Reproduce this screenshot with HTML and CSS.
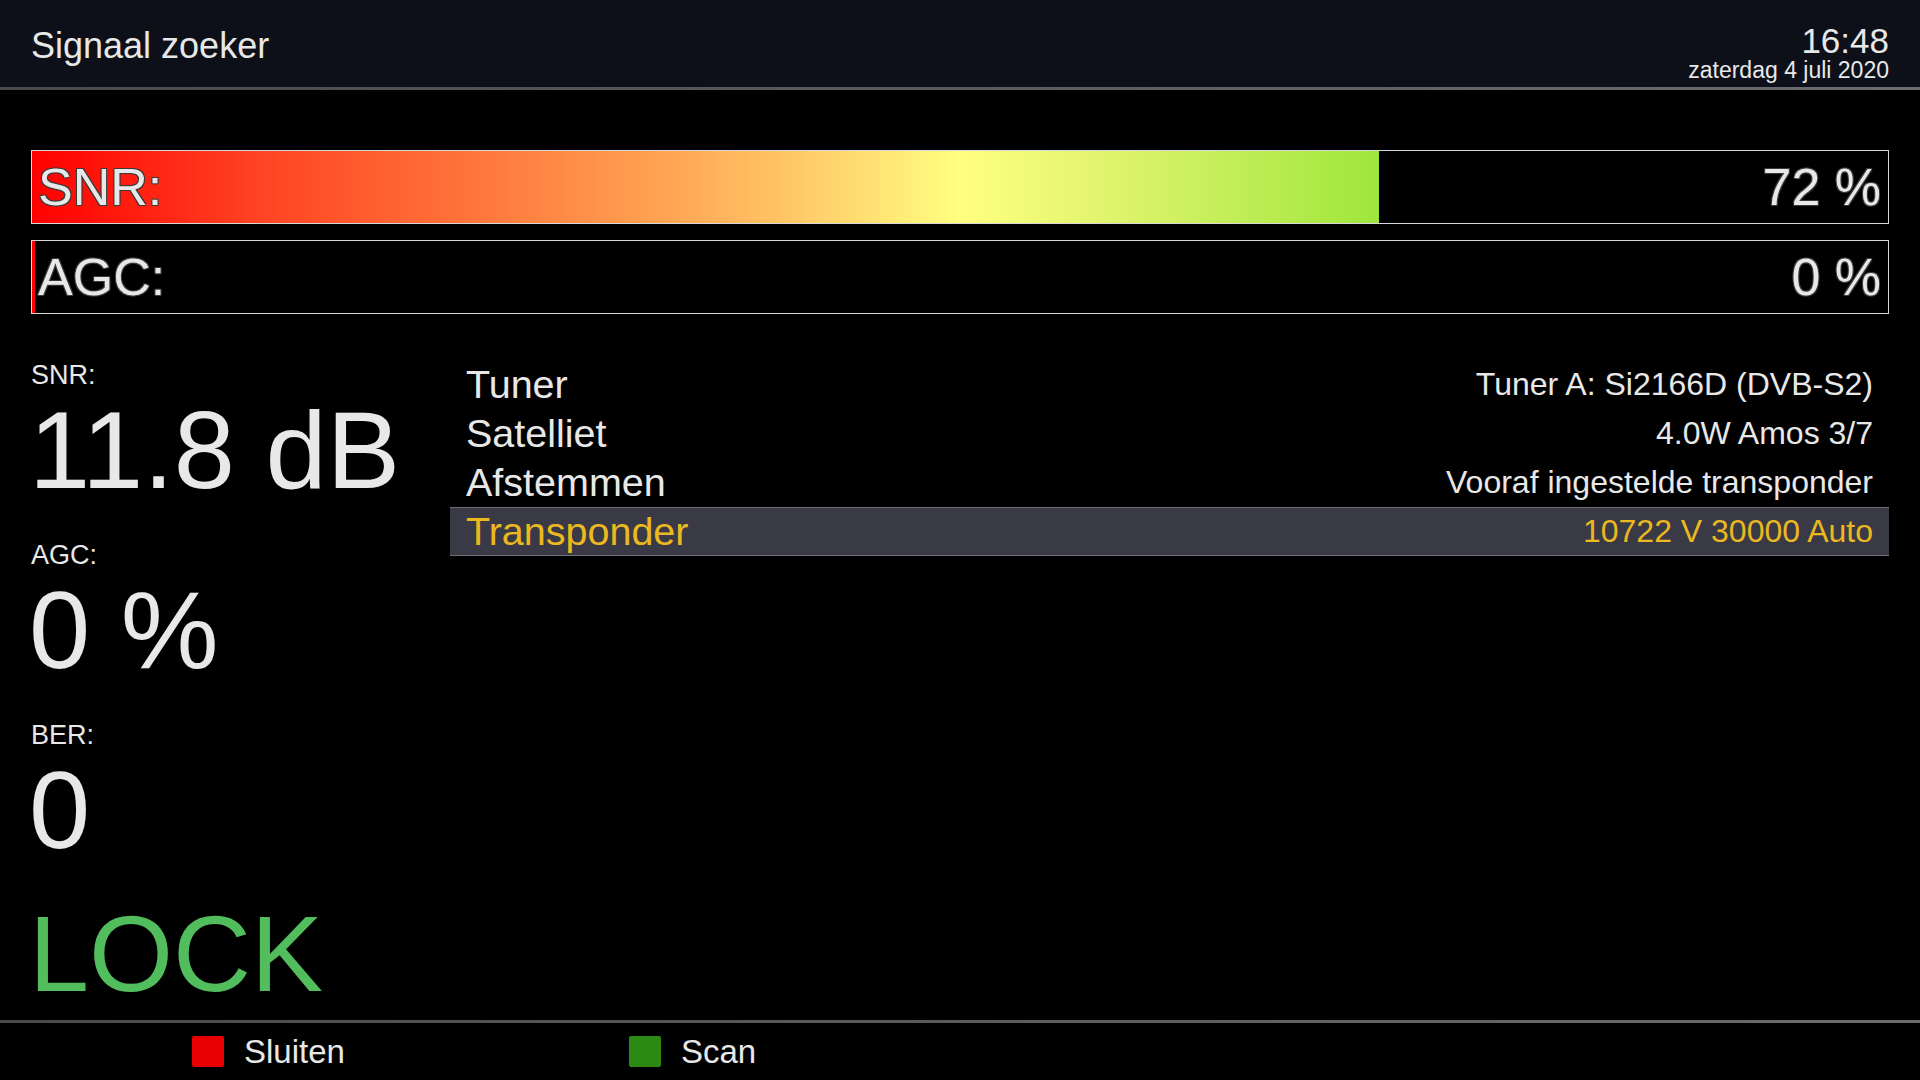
FILE: index.html
```html
<!DOCTYPE html>
<html lang="nl">
<head>
  <meta charset="UTF-8" />
  <meta name="viewport" content="width=device-width, initial-scale=1.0"/>
  <title>Signaal zoeker</title>
  <link rel="stylesheet" href="styles.css">
</head>
<body>
  <div class="header">
    <div class="title">Signaal zoeker</div>
    <div class="clock">
      <div class="time">16:48</div>
      <div class="date">zaterdag 4 juli 2020</div>
    </div>
  </div>
  <div class="header-line"></div>

  <!-- Signal bars -->
  <div class="bars">
    <div class="bar">
      <div class="bar-fill" style="width: 72.6%"></div>
      <span class="bar-label">SNR:</span>
      <span class="bar-label">72 %</span>
    </div>
    <div class="bar">
      <div class="bar-fill" style="width: 3px"></div>
      <span class="bar-label">AGC:</span>
      <span class="bar-label">0 %</span>
    </div>
  </div>

  <div class="main">
    <div class="stats">
      <div class="stat">
        <div class="stat-label">SNR:</div>
        <div class="stat-value">11.8 dB</div>
      </div>
      <div class="stat">
        <div class="stat-label">AGC:</div>
        <div class="stat-value">0 %</div>
      </div>
      <div class="stat">
        <div class="stat-label">BER:</div>
        <div class="stat-value">0</div>
      </div>
      <div class="lock">LOCK</div>
    </div>

    <div class="info-list">
      <div class="info-row">
        <span class="info-name">Tuner</span>
        <span class="info-value">Tuner A: Si2166D (DVB-S2)</span>
      </div>
      <div class="info-row">
        <span class="info-name">Satelliet</span>
        <span class="info-value">4.0W Amos 3/7</span>
      </div>
      <div class="info-row">
        <span class="info-name">Afstemmen</span>
        <span class="info-value">Vooraf ingestelde transponder</span>
      </div>
      <div class="info-row selected">
        <span class="info-name">Transponder</span>
        <span class="info-value">10722 V 30000 Auto</span>
      </div>
    </div>
  </div>

  <div class="footer-line"></div>
  <div class="footer">
    <div class="key"><span class="key-color red"></span>Sluiten</div>
    <div class="key"><span class="key-color green"></span>Scan</div>
  </div>
</body>
</html>
```

FILE: styles.css
```css
body {
  margin: 0;
  width: 1920px;
  height: 1080px;
  background: #000;
  color: #e8e8e8;
  font-family: 'Liberation Sans', Arial, sans-serif;
  display: flex;
  flex-direction: column;
  overflow: hidden;
}

.header {
  height: 87px;
  box-sizing: border-box;
  padding: 24px 31px 0 31px;
  background: #0d1018;
  display: flex;
  justify-content: space-between;
  align-items: flex-start;
}

.title {
  margin-top: 2px;
  font-size: 36px;
  line-height: 40px;
}

.clock {
  text-align: right;
}

.time {
  font-size: 35px;
  line-height: 34px;
}

.date {
  font-size: 23px;
  line-height: 24px;
}

.header-line, .footer-line {
  height: 3px;
  background: linear-gradient(to right, #4a4a4e, #6c6c70);
}

.bars {
  margin-top: 60px;
  padding: 0 31px;
  display: flex;
  flex-direction: column;
  gap: 16px;
}

.bar {
  position: relative;
  height: 74px;
  box-sizing: border-box;
  border: 1px solid #d8d8d8;
  padding: 0 7px 0 6px;
  display: flex;
  justify-content: space-between;
  align-items: center;
}

.bar-fill {
  position: absolute;
  left: 0;
  top: 0;
  bottom: 0;
  background: linear-gradient(to right, #ff0000 0%, #ff4222 12%, #ff7a3e 25%, #ffa855 35%, #ffc868 41%, #ffff80 50%, #e0f46e 58%, #9ee63c 72.6%, #60d020 100%);
  background-size: 1856px 100%;
}

.bar-label {
  position: relative;
  font-size: 52px;
  line-height: 72px;
  text-shadow: -1px -1px 0 #3a3a3a, 1px -1px 0 #3a3a3a, -1px 1px 0 #3a3a3a, 1px 1px 0 #3a3a3a;
}

.main {
  flex: 1;
  margin-top: 46px;
  padding: 0 31px;
  display: grid;
  grid-template-columns: 419px 1fr;
}

.stat {
  margin-bottom: 35px;
}

.stat-label {
  font-size: 27px;
  line-height: 30px;
}

.stat-value {
  margin: 5px 0 0 -2px;
  font-size: 110px;
  line-height: 110px;
}

.lock {
  margin: 10px 0 0 -2px;
  font-size: 108px;
  line-height: 108px;
  color: #52bd5c;
}

.info-row {
  height: 49px;
  box-sizing: border-box;
  padding: 0 16px;
  display: flex;
  justify-content: space-between;
  align-items: center;
}

.info-name {
  font-size: 39.5px;
  line-height: 49px;
}

.info-value {
  font-size: 32px;
  line-height: 49px;
}

.info-row.selected {
  background: #393a45;
  border-top: 1px solid #6e6f78;
  border-bottom: 1px solid #6e6f78;
  color: #ebb81f;
}

.info-row.selected .info-name,
.info-row.selected .info-value {
  line-height: 47px;
}

.footer {
  flex: 0 0 57px;
  box-sizing: border-box;
  padding: 0 0 0 192px;
  display: flex;
}

.key {
  width: 437px;
  display: flex;
  align-items: center;
  gap: 20px;
  font-size: 33px;
  line-height: 31px;
}

.key-color {
  width: 32px;
  height: 31px;
  border-radius: 2px;
}

.key-color.red {
  background: #e60000;
}

.key-color.green {
  background: #2b8a14;
}
```
